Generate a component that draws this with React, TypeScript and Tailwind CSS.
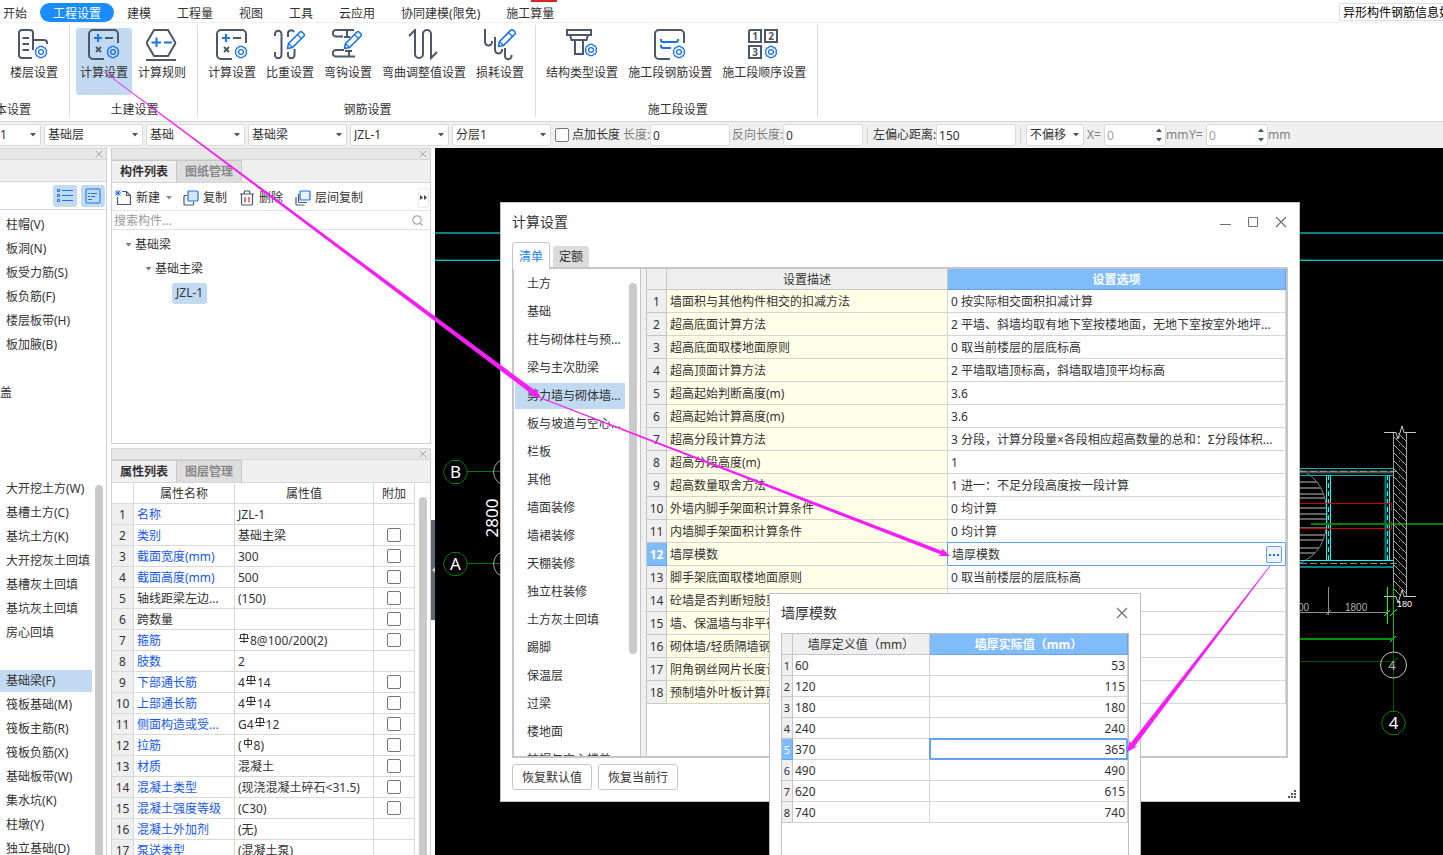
import React, { useState } from 'react';

const BLUE = '#1a73e8';
const INK = '#4d576a';

type Point = { x: number; y: number };

const gearPath = (cx: number, cy: number, r: number): string => {
  const count = 6;
  let d = '';
  for (let i = 0; i < count; i++) {
    const mid = (i / count) * Math.PI * 2 - Math.PI / 2;
    const at = (angle: number, radius: number) =>
      `${(cx + Math.cos(angle) * radius).toFixed(2)} ${(cy + Math.sin(angle) * radius).toFixed(2)}`;
    d += `${i === 0 ? 'M' : 'L'}${at(mid - 0.3, r)} L${at(mid + 0.3, r)} `;
    d += `Q${at(mid + 0.52, r * 0.72)} ${at(mid + 0.75, r)} `;
  }
  return `${d}Z`;
};

const Gear = ({ x, y }: Point): React.ReactElement => (
  <g stroke={BLUE} strokeWidth="1.3" strokeLinejoin="round">
    <path d={gearPath(x, y, 5.8)} />
    <circle cx={x} cy={y} r="2.4" />
  </g>
);

const Pencil = ({ x, y }: Point): React.ReactElement => (
  <g transform={`translate(${x} ${y})`} stroke={BLUE} strokeWidth="1.6" strokeLinejoin="round" fill="#fff">
    <path d="M0.5 17.5 L1.5 12.5 L13 1 Q14 0.2 15 1 L17 3 Q17.8 4 17 5 L5.5 16.5 Z" />
    <path d="M10.5 3.5 L14.5 7.5 M1.5 12.5 L5.5 16.5" strokeWidth="1.2" />
  </g>
);

const FRAME = 'M30 14 V5 a4 4 0 0 0 -4 -4 H5 a4 4 0 0 0 -4 4 V26 a4 4 0 0 0 4 4 H16';

const ICONS: Record<string, React.ReactElement> = {
  floor: (
    <>
      <path d="M15 21 V4 a3 3 0 0 0 -3 -3 H4 a3 3 0 0 0 -3 3 V26 a3 3 0 0 0 3 3 H14" />
      <path d="M4.5 9 H11 M4.5 15 H11 M4.5 21 H11 M15 11 H26 a3 3 0 0 1 3 3 V15" />
      <Gear x={23} y={23} />
    </>
  ),
  calc: (
    <>
      <path d={FRAME} />
      <path d="M17 9 H25 M8 18 L13 23 M13 18 L8 23" />
      <path d="M6 9 H14 M10 5 V13" stroke={BLUE} />
      <Gear x={25} y={23} />
    </>
  ),
  rule: (
    <>
      <path d="M8 1 H22 L29 13 Q29.5 14 29 15 L22 27 H8 L1 15 Q0.5 14 1 13 Z M0 31 H30" />
      <path d="M5.5 13.5 H15 M10.5 8.5 V18 M18 13.5 H26" stroke={BLUE} />
    </>
  ),
  weight: (
    <>
      <path d="M1 7 V5 a3.2 3.2 0 0 1 6.5 0 V26 a3.2 3.2 0 0 1 -6.5 0 V23" />
      <path d="M14 8 V5 a3.2 3.2 0 0 1 6 -2 M14 23 V26 a3.2 3.2 0 0 0 6.5 0 V20" />
      <Pencil x={13} y={2} />
    </>
  ),
  hook: (
    <>
      <path d="M22 1 H4 a3 3 0 0 0 0 6.5 H11 M15 1 V9 M12 8 H18" />
      <path d="M12 21 H4 a3 3 0 0 0 0 6.5 H23 M17 22 V27 M13 22 H20" />
      <Pencil x={12} y={2} />
    </>
  ),
  bend: <path d="M1 7 L7 1 V25 a4 4 0 0 0 8 0 V5 a4 4 0 0 1 8 0 V29 L29 23" />,
  loss: (
    <>
      <path d="M1 0 V13 a3.4 3.4 0 0 0 7 0 V12" />
      <path d="M11 8 V21 a3.4 3.4 0 0 0 7 0 V20 M21 19 V27 a3.2 3.2 0 0 0 6.5 0 V26" />
      <Pencil x={14} y={0} />
    </>
  ),
  structure: (
    <>
      <path d="M1 1 H25 V6 H1 Z M4 6 L5.5 11 H20.5 L22 6 M9 11 V25 H17 V11" />
      <Gear x={25} y={21} />
    </>
  ),
  rebar: (
    <>
      <path d={FRAME} />
      <path d="M7 10 V11 a2 2 0 0 0 2 2 H22 a2 2 0 0 0 2 -2 V10 M7 16 V17 a2 2 0 0 0 2 2 H17" stroke={BLUE} />
      <Gear x={25} y={23} />
    </>
  ),
  order: (
    <>
      <path d="M2 1 H13 V13 H1 V2 Z M17 1 H29 V13 H17 Z M1 17 H13 V29 H1 Z" />
      <g fill={INK} stroke="none" fontSize="10" fontWeight="700" textAnchor="middle">
        <text x="7" y="11">1</text>
        <text x="23" y="11">2</text>
        <text x="7" y="27">3</text>
      </g>
      <Gear x={23} y={23} />
    </>
  ),
};

const RibbonIcon = ({ name }: { name: string }): React.ReactElement => (
  <svg width="32" height="32" viewBox="0 0 32 32" fill="none" stroke={INK} strokeWidth="2">
    {ICONS[name]}
  </svg>
);

const MENUS = ['开始', '工程设置', '建模', '工程量', '视图', '工具', '云应用', '协同建模(限免)', '施工算量'];

const RIBBON_GROUPS = [
  {
    label: '土建设置',
    items: [
      { icon: 'calc', label: '计算设置', active: true },
      { icon: 'rule', label: '计算规则' },
    ],
  },
  {
    label: '钢筋设置',
    items: [
      { icon: 'calc', label: '计算设置' },
      { icon: 'weight', label: '比重设置' },
      { icon: 'hook', label: '弯钩设置' },
      { icon: 'bend', label: '弯曲调整值设置' },
      { icon: 'loss', label: '损耗设置' },
    ],
  },
  {
    label: '施工段设置',
    items: [
      { icon: 'structure', label: '结构类型设置' },
      { icon: 'rebar', label: '施工段钢筋设置' },
      { icon: 'order', label: '施工段顺序设置' },
    ],
  },
];

const COMPONENT_TYPES = [
  '柱帽(V)', '板洞(N)', '板受力筋(S)', '板负筋(F)', '楼层板带(H)', '板加腋(B)', '', '盖', '', '', '',
  '大开挖土方(W)', '基槽土方(C)', '基坑土方(K)', '大开挖灰土回填', '基槽灰土回填', '基坑灰土回填',
  '房心回填', '', '基础梁(F)', '筏板基础(M)', '筏板主筋(R)', '筏板负筋(X)', '基础板带(W)', '集水坑(K)',
  '柱墩(Y)', '独立基础(D)',
];

type Property = { name: string; value: string; plain?: boolean; check?: boolean };

// {3} and {1} in a value stand for the rebar grade marks
const PROPERTIES: Array<Property> = [
  { name: '名称', value: 'JZL-1' },
  { name: '类别', value: '基础主梁', check: true },
  { name: '截面宽度(mm)', value: '300', check: true },
  { name: '截面高度(mm)', value: '500', check: true },
  { name: '轴线距梁左边...', value: '(150)', plain: true, check: true },
  { name: '跨数量', value: '', plain: true, check: true },
  { name: '箍筋', value: '{3}8@100/200(2)', check: true },
  { name: '肢数', value: '2' },
  { name: '下部通长筋', value: '4{3}14', check: true },
  { name: '上部通长筋', value: '4{3}14', check: true },
  { name: '侧面构造或受...', value: 'G4{3}12', check: true },
  { name: '拉筋', value: '({1}8)', check: true },
  { name: '材质', value: '混凝土', check: true },
  { name: '混凝土类型', value: '(现浇混凝土碎石<31.5)', check: true },
  { name: '混凝土强度等级', value: '(C30)', check: true },
  { name: '混凝土外加剂', value: '(无)' },
  { name: '泵送类型', value: '(混凝土泵)' },
];

const CATEGORIES = [
  '土方', '基础', '柱与砌体柱与预...', '梁与主次肋梁', '剪力墙与砌体墙...', '板与坡道与空心...', '栏板', '其他',
  '墙面装修', '墙裙装修', '天棚装修', '独立柱装修', '土方灰土回填', '踢脚', '保温层', '过梁', '楼地面',
  '柱帽与空心楼盖...',
];

const SETTINGS = [
  ['墙面积与其他构件相交的扣减方法', '0 按实际相交面积扣减计算'],
  ['超高底面计算方法', '2 平墙、斜墙均取有地下室按楼地面，无地下室按室外地坪...'],
  ['超高底面取楼地面原则', '0 取当前楼层的层底标高'],
  ['超高顶面计算方法', '2 平墙取墙顶标高，斜墙取墙顶平均标高'],
  ['超高起始判断高度(m)', '3.6'],
  ['超高起始计算高度(m)', '3.6'],
  ['超高分段计算方法', '3 分段，计算分段量×各段相应超高数量的总和：Σ分段体积...'],
  ['超高分段高度(m)', '1'],
  ['超高数量取舍方法', '1 进一：不足分段高度按一段计算'],
  ['外墙内脚手架面积计算条件', '0 均计算'],
  ['内墙脚手架面积计算条件', '0 均计算'],
  ['墙厚模数', '墙厚模数'],
  ['脚手架底面取楼地面原则', '0 取当前楼层的层底标高'],
  ['砼墙是否判断短肢剪', ''],
  ['墙、保温墙与非平行', ''],
  ['砌体墙/轻质隔墙钢', ''],
  ['阴角钢丝网片长度计', ''],
  ['预制墙外叶板计算面', ''],
];

const WALL_MODULES = [
  [60, 53],
  [120, 115],
  [180, 180],
  [240, 240],
  [370, 365],
  [490, 490],
  [620, 615],
  [740, 740],
];

const CloseIcon = ({ size }: { size: number }): React.ReactElement => (
  <svg width={size} height={size} viewBox="0 0 12 12" fill="none" stroke="currentColor" strokeWidth="1.2">
    <path d="M1 1 L11 11 M11 1 L1 11" />
  </svg>
);

const Caret = ({ className = '' }: { className?: string }): React.ReactElement => (
  <svg width="6" height="4" viewBox="0 0 6 4" className={className} fill="currentColor">
    <path d="M0 0 H6 L3 3.6 Z" />
  </svg>
);

const SelectBox = ({ label, value, width }: { label: string; value: string; width: string }) => (
  <div className={`relative shrink-0 ${width}`}>
    <select
      aria-label={label}
      className="block h-[22px] w-full appearance-none rounded-[3px] border border-[#d9d9d9] bg-white pl-[3px]"
    >
      <option>{value}</option>
    </select>
    <Caret className="pointer-events-none absolute top-[9px] right-[5px] text-[#4d576a]" />
  </div>
);

const FIELD = 'h-[22px] rounded-[3px] border border-[#d9d9d9] bg-white px-[2px]';
const CHECKBOX = 'block appearance-none rounded-[2px] border border-[#777] bg-white';

const SpinBox = ({ id, label }: { id: string; label: string }): React.ReactElement => (
  <div className="flex items-center text-[#808080]">
    <label htmlFor={id} className="w-[17px] shrink-0">{label}</label>
    <div className="relative">
      <input id={id} type="text" defaultValue="0" className={`${FIELD} block w-[62px] text-[#a0a0a0]`} />
      <div className="pointer-events-none absolute top-[4px] right-[4px] flex h-[14px] flex-col justify-between text-[#4d576a]">
        <Caret className="rotate-180" />
        <Caret />
      </div>
    </div>
    <span className="w-[23px]">mm</span>
  </div>
);

const MenuBar = (): React.ReactElement => {
  const [current, setCurrent] = useState('工程设置');
  return (
    <nav className="relative flex h-[23px] shrink-0 items-end border-b border-[#f0f0f0]">
      {MENUS.map((menu, index) => (
        <button
          type="button"
          key={menu}
          onClick={() => setCurrent(menu)}
          className={`h-[19px] shrink-0 rounded-full pt-[2px] pr-[13px] leading-[17px] ${
            index === 0 ? 'pl-[3px]' : 'pl-[13px]'
          } ${menu === current ? 'bg-[#1a8cff] text-white' : ''}`}
        >
          {menu}
        </button>
      ))}
      <span className="absolute top-0 left-[531px] h-[2px] w-[26px] bg-[#e02020]" />
      <div className="mb-[1px] ml-auto h-[18px] w-[104px] overflow-hidden rounded-l-[2px] border border-r-0 border-[#ddd] pl-[3px] leading-[18px] whitespace-nowrap text-black">
        异形构件钢筋信息如
      </div>
    </nav>
  );
};

const RibbonButton = ({ icon, label, active }: { icon: string; label: string; active?: boolean }) => (
  <button
    type="button"
    className={`flex h-[67px] shrink-0 flex-col items-center rounded-[3px] px-1 pt-px ${active ? 'bg-[#c2d9f2]' : ''}`}
  >
    <RibbonIcon name={icon} />
    <span className="mt-[3px] leading-[18px]">{label}</span>
  </button>
);

const Ribbon = (): React.ReactElement => (
  <div className="flex h-[98px] shrink-0 overflow-hidden pt-[2px] pb-[4px]">
    <div className="flex w-[70px] shrink-0 flex-col items-start border-r border-[#dcdcdc] pt-[3px]">
      <div className="pl-[6px]">
        <RibbonButton icon="floor" label="楼层设置" />
      </div>
      <div className="-ml-[5px] pt-[6px] leading-[18px]">本设置</div>
    </div>
    {RIBBON_GROUPS.map((group) => (
      <div key={group.label} className="flex shrink-0 flex-col border-r border-[#dcdcdc] pt-[3px] pr-[7px] pl-[6px]">
        <div className="flex gap-[2px]">
          {group.items.map((item) => (
            <RibbonButton key={item.label} {...item} />
          ))}
        </div>
        <div className="pt-[6px] pl-[3px] text-center leading-[18px]">{group.label}</div>
      </div>
    ))}
  </div>
);

const OptionBar = (): React.ReactElement => (
  <div className="flex h-[27px] shrink-0 items-center overflow-hidden border-t border-[#d4d4d4] bg-[#f0f0f0] whitespace-nowrap">
    <div className="flex shrink-0 gap-[3px]">
      <div className="relative w-[41px]">
        <select
          aria-label="分区"
          className="block h-[22px] w-full appearance-none rounded-r-[3px] border border-l-0 border-[#d9d9d9] bg-white"
        >
          <option>1</option>
        </select>
        <Caret className="pointer-events-none absolute top-[9px] right-[5px] text-[#4d576a]" />
      </div>
      <SelectBox label="楼层" value="基础层" width="w-[99px]" />
      <SelectBox label="构件类别" value="基础" width="w-[99px]" />
      <SelectBox label="构件类型" value="基础梁" width="w-[99px]" />
      <SelectBox label="构件" value="JZL-1" width="w-[99px]" />
      <SelectBox label="分层" value="分层1" width="w-[99px]" />
    </div>
    <label className="ml-[4px] flex items-center gap-[3px]">
      <input type="checkbox" className={`${CHECKBOX} size-[14px]`} />
      点加长度
    </label>
    <label htmlFor="length" className="ml-[3px] w-[27px] text-[#808080]">长度:</label>
    <input id="length" type="text" defaultValue="0" className={`${FIELD} w-[80px]`} />
    <label htmlFor="reverse" className="ml-[2px] w-[51px] text-[#808080]">反向长度:</label>
    <input id="reverse" type="text" defaultValue="0" className={`${FIELD} w-[80px]`} />
    <span className="mx-[4px] h-[17px] w-px bg-[#d0d0d0]" />
    <label htmlFor="offset" className="w-[64px] pl-px">左偏心距离:</label>
    <input id="offset" type="text" defaultValue="150" className={`${FIELD} w-[80px]`} />
    <span className="mx-[4px] h-[17px] w-px bg-[#d0d0d0]" />
    <SelectBox label="偏移" value="不偏移" width="w-[58px] ml-px mr-[3px]" />
    <SpinBox id="offset-x" label="X=" />
    <SpinBox id="offset-y" label="Y=" />
  </div>
);

const PanelTitle = (): React.ReactElement => (
  <div className="flex h-[12px] shrink-0 items-center justify-end border-y border-[#d6d6d6] bg-[#e8e8e8] pr-[3px]">
    <button type="button" aria-label="关闭" className="text-[#999]">
      <CloseIcon size={8} />
    </button>
  </div>
);

const PanelTabs = ({ tabs }: { tabs: Array<string> }): React.ReactElement => (
  <div className="flex h-[23px] shrink-0 border-b border-[#d6d6d6] bg-[#f0f0f0] font-bold">
    {tabs.map((tab, index) => (
      <button
        type="button"
        key={tab}
        className={`h-[22px] w-[65px] border-t border-r border-[#c8c8cc] pt-px ${
          index === 0 ? 'bg-[#f0f0f0]' : 'bg-[#dedede] text-[#888]'
        }`}
      >
        {tab}
      </button>
    ))}
  </div>
);

const TypePanel = (): React.ReactElement => (
  <aside className="flex w-[107px] shrink-0 flex-col border-r border-[#d0d0d0]">
    <PanelTitle />
    <div className="h-[22px] shrink-0 border-b border-[#d6d6d6] bg-[#f0f0f0]" />
    <div className="flex h-[28px] shrink-0 items-center justify-end gap-[4px] border-b border-[#d6d6d6] pr-[1px]">
      <button type="button" aria-label="列表" className="flex h-[22px] w-[24px] items-center justify-center rounded-[3px] bg-[#c2d9f2]">
        <svg width="16" height="14" viewBox="0 0 16 14" fill="none" stroke={BLUE}>
          <path d="M0.5 0.5 H2.5 V2.5 H0.5 Z M0.5 5.5 H2.5 V7.5 H0.5 Z M0.5 10.5 H2.5 V12.5 H0.5 Z M5 1.5 H16 M5 6.5 H16 M5 11.5 H16" />
        </svg>
      </button>
      <button type="button" aria-label="详细" className="flex h-[22px] w-[24px] items-center justify-center rounded-[3px] bg-[#c2d9f2]">
        <svg width="16" height="16" viewBox="0 0 16 16" fill="none" stroke={BLUE}>
          <rect x="1" y="1" width="14" height="14" rx="1" />
          <path d="M3 5.5 H5 M6 5.5 H12 M3 8.5 H5 M6 8.5 H10 M3 11.5 H7" />
        </svg>
      </button>
    </div>
    <div className="flex min-h-0 flex-1">
      <ul className="w-[92px] shrink-0 overflow-hidden pt-[3px] whitespace-nowrap">
        {COMPONENT_TYPES.map((type, index) => (
          <li key={index} className="py-px">
            <div
              className={`flex h-[22px] items-center ${type === '盖' ? '' : 'pl-[6px]'} ${
                type === '基础梁(F)' ? 'bg-[#c2d9f2]' : ''
              }`}
            >
              {type}
            </div>
          </li>
        ))}
      </ul>
      <div className="mt-[275px] ml-[3px] w-[8px] rounded-t-full bg-[#cacaca]" />
    </div>
  </aside>
);

const ListPanel = (): React.ReactElement => (
  <section className="flex h-[296px] shrink-0 flex-col border-x border-b border-[#d0d0d0]">
    <PanelTitle />
    <PanelTabs tabs={['构件列表', '图纸管理']} />
    <div className="flex h-[28px] shrink-0 items-center border-b border-[#e4e4e4] pt-[2px] pl-[3px]">
      <button type="button" className="flex items-center gap-[4px]">
        <svg width="17" height="16" viewBox="0 0 17 16" fill="none" stroke={INK} strokeWidth="1.2">
          <path d="M7 1.5 H11.5 L15.5 5.5 V14.5 H2.5 V7 M11.5 1.5 V5.5 H15.5" />
          <path d="M0.5 0.5 L5.5 5.5 M5.5 0.5 L0.5 5.5 M3 0 V6 M0 3 H6" stroke={BLUE} strokeWidth="1" />
        </svg>
        新建
      </button>
      <Caret className="ml-[6px] text-[#888]" />
      <button type="button" className="ml-[11px] flex items-center gap-[4px]">
        <svg width="16" height="16" viewBox="0 0 16 16" fill="none" strokeWidth="1.2">
          <path d="M4 5.5 H2 Q1 5.5 1 6.5 V14 Q1 15 2 15 H9.5 Q10.5 15 10.5 14 V12" stroke={INK} />
          <rect x="5" y="1" width="10" height="10" rx="1" fill="#d5e6fd" stroke={BLUE} />
        </svg>
        复制
      </button>
      <button type="button" className="ml-[13px] flex items-center gap-[5px]">
        <svg width="14" height="16" viewBox="0 0 14 16" fill="none" stroke={INK} strokeWidth="1.2">
          <path d="M0 4 H14 M4 4 L4.5 1 H9.5 L10 4 M1.5 4 V14 Q1.5 15 2.5 15 H11.5 Q12.5 15 12.5 14 V4" />
          <path d="M5 7 V12.5 M9 7 V12.5" stroke="#e02020" />
        </svg>
        删除
      </button>
      <button type="button" className="ml-[12px] flex items-center gap-[4px]">
        <svg width="16" height="16" viewBox="0 0 16 16" fill="none" strokeWidth="1.2">
          <path d="M3.5 4 V11.5 Q3.5 12.5 4.5 12.5 H12 M1 7 V14 Q1 15 2 15 H9.5" stroke={INK} />
          <rect x="5" y="1" width="10" height="9" rx="1" fill="#e8f1fe" stroke={BLUE} />
        </svg>
        层间复制
      </button>
      <button type="button" aria-label="更多" className="mr-[1px] ml-auto flex h-[20px] w-[11px] items-center justify-center rounded-[3px] border border-[#e8e8e8]">
        <svg width="7" height="5" viewBox="0 0 7 5" fill="#3d4657">
          <path d="M0 0 L3 2.5 L0 5 Z M4 0 L7 2.5 L4 5 Z" />
        </svg>
      </button>
    </div>
    <div className="flex h-[19px] shrink-0 items-center border-b border-[#e0e0e0] pt-px pr-[7px] pl-[2px]">
      <input
        type="text"
        aria-label="搜索构件"
        placeholder="搜索构件..."
        className="w-full min-w-0 flex-1 leading-[18px] placeholder:text-[#999]"
      />
      <svg width="11" height="11" viewBox="0 0 11 11" fill="none" stroke="#aaa" strokeWidth="1.2">
        <circle cx="5" cy="5" r="4.2" />
        <path d="M8 8 L10.5 10.5" />
      </svg>
    </div>
    <ul className="pt-[3px]">
      <li className="flex h-[24px] items-center gap-[3px] pl-[13px]">
        <Caret className="w-[7px] text-[#777]" />
        基础梁
      </li>
      <li className="flex h-[24px] items-center gap-[3px] pl-[33px]">
        <Caret className="w-[7px] text-[#777]" />
        基础主梁
      </li>
      <li className="flex h-[24px] items-center pl-[60px]">
        <span className="h-[21px] rounded-[3px] bg-[#c2d9f2] px-[4px] leading-[20px]">JZL-1</span>
      </li>
    </ul>
  </section>
);

const RebarMark = ({ grade }: { grade: number }): React.ReactElement => (
  <svg
    width="12"
    height="10"
    viewBox="0 0 12 10"
    className="mb-[2px] inline-block align-baseline"
    fill="none"
    stroke="#333"
  >
    {grade === 3 ? (
      <path d="M2.5 1.5 H9.5 V5.5 H2.5 Z M6 0 V10 M1 5.5 H11 M2 8.5 H10" />
    ) : (
      <path d="M2.5 2.5 H9.5 V6.5 H2.5 Z M6 0 V10" />
    )}
  </svg>
);

const PropertyValue = ({ value }: { value: string }): React.ReactElement => (
  <div className="h-[18px] overflow-hidden pl-[3px]">
    {value.split(/(\{\d\})/).map((part, index) => {
      if (part === '{3}') return <RebarMark grade={3} key={index} />;
      if (part === '{1}') return <RebarMark grade={1} key={index} />;
      return part;
    })}
  </div>
);

const PropertyPanel = (): React.ReactElement => (
  <section className="mt-[4px] flex min-h-0 flex-1 flex-col overflow-hidden border-x border-[#d0d0d0]">
    <PanelTitle />
    <PanelTabs tabs={['属性列表', '图层管理']} />
    <div className="flex min-h-0 flex-1">
      <div className="w-[303px] shrink-0 overflow-hidden">
        <table className="w-full table-fixed border-separate border-spacing-0 leading-[18px]">
          <thead>
            <tr className="h-[21px] [&>th]:border-r [&>th]:border-b [&>th]:border-[#d9d9d9] [&>th]:p-0 [&>th]:pt-px [&>th]:font-normal">
              <th className="w-[22px]"></th>
              <th className="w-[101px]">属性名称</th>
              <th className="w-[139px]">属性值</th>
              <th>附加</th>
            </tr>
          </thead>
          <tbody>
            {PROPERTIES.map((property, index) => (
              <tr
                key={property.name}
                className="h-[21px] [&>*]:border-r [&>*]:border-b [&>*]:border-[#d9d9d9] [&>*]:p-0 [&>*:not(:last-child)]:pt-px"
              >
                <th className="bg-[#efefef] font-normal">{index + 1}</th>
                <td className={`truncate ${property.plain ? '' : 'text-[#1557f0]'}`}>
                  <span className="pl-[3px]">{property.name}</span>
                </td>
                <td className="whitespace-nowrap">
                  <PropertyValue value={property.value} />
                </td>
                <td>
                  {property.check && (
                    <input type="checkbox" aria-label={property.name} className={`${CHECKBOX} mx-auto size-[14px]`} />
                  )}
                </td>
              </tr>
            ))}
          </tbody>
        </table>
      </div>
      <div className="mt-[14px] ml-[4px] w-[8px] rounded-t-full bg-[#cacaca]" />
    </div>
  </section>
);

const HATCH = Array.from({ length: 22 }, (_, i) => 428 + i * 8);
const SLAB_LINES = [482, 488, 494, 498, 508, 514, 519, 528, 535, 540, 548, 553];

const Drawing = (): React.ReactElement => (
  <svg width="1008" height="707" viewBox="435 148 1008 707" fill="none" className="absolute top-0 left-0">
    <defs>
      <clipPath id="wall">
        <rect x="1394" y="433" width="13" height="163" />
      </clipPath>
      <clipPath id="slab">
        <path d="M1290 470 H1300 Q1327 480 1327 517 Q1327 552 1300 563 H1290 Z" />
      </clipPath>
    </defs>
    <path d="M435 233 H1443" stroke="#008080" strokeWidth="2" />
    <path d="M435 259.5 H1443" stroke="#004b4b" />
    <path d="M435 260.5 H1443" stroke="#00c0c0" />

    {[
      { y: 472, name: 'B' },
      { y: 564, name: 'A' },
    ].map(({ y, name }) => (
      <g key={name}>
        <path
          d={`M443.5 ${y} l2.3 -7 l6 -4.5 h7.4 l6 4.5 l2.3 7 l-2.3 7 l-6 4.5 h-7.4 l-6 -4.5 Z M467.5 ${y - 0.5} H500`}
          stroke="#007a00"
        />
        <circle cx="507" cy={y} r="13.5" stroke="#aaa" />
        <text x="455.5" y={y + 6} fill="#fff" fontSize="17" textAnchor="middle">{name}</text>
      </g>
    ))}
    <text transform="translate(498 518) rotate(-90)" fill="#fff" fontSize="17" textAnchor="middle">2800</text>

    <g clipPath="url(#slab)" stroke="#606060" strokeWidth="2">
      {SLAB_LINES.map((y) => (
        <path key={y} d={`M1300 ${y} H1328`} />
      ))}
    </g>
    <path d="M1300 470 Q1327 480 1327 517 Q1327 552 1300 563" stroke="#808080" />
    <path d="M1300 468.5 H1393 M1300 475.5 H1393" stroke="#00b4b4" />
    <path d="M1300 472 H1393" stroke="#505050" strokeWidth="3" />
    <path d="M1300 471.5 H1400 M1300 563.5 H1400" stroke="#909090" strokeDasharray="7 3" />
    <path d="M1300 560.5 H1393" stroke="#00ffff" />
    <path d="M1300 567 H1393" stroke="#008080" strokeWidth="2" />
    <path d="M1326.5 475 V560 M1330.5 475 V560 M1389.5 475 V560" stroke="#00ffff" />
    <path d="M1328.5 475 V560 M1387.5 475 V560" stroke="#00ffff" strokeDasharray="5 3" />
    <path d="M1385.5 475 V560" stroke="#008080" strokeWidth="2" />
    <path d="M1300 503.5 H1391.5 V511 M1300 528.5 H1391.5 V521" stroke="#c80000" />
    <path d="M1311 524 H1443" stroke="#008000" strokeWidth="2" />

    <g clipPath="url(#wall)" stroke="#a0a0a0">
      {HATCH.map((y) => (
        <path key={y} d={`M1393 ${y} l14 14 M1396 ${y + 3} h1 M1402 ${y + 2} h1 M1399 ${y + 9} h1`} />
      ))}
    </g>
    <path d="M1393.5 433 V596 M1406.5 433 V596" stroke="#a0a0a0" />
    <path d="M1384 432.5 H1396 L1398 439 L1402 426 L1404 432.5 H1416" stroke="#c8c8c8" />
    <path d="M1384 596.5 H1396 L1398 603 L1402 590 L1404 596.5 H1416" stroke="#c8c8c8" />

    <path d="M1300 612.5 H1388 M1328.5 587 V615 M1326 615 l5 -5" stroke="#909090" />
    <path d="M1387.5 587 V624 M1384 616 l6 -6 M1390 616 l7 -7 M1390 642 l6 -6" stroke="#00ff00" />
    <path d="M1393.5 586 V652" stroke="#00c000" />
    <path d="M1393.5 652 V712" stroke="#005a00" />
    <path d="M1300 639 H1393" stroke="#009000" strokeWidth="2" />
    <path d="M1300 661.5 H1393" stroke="#005000" />
    <g fill="#b0b0b0" fontSize="10" fontFamily="Liberation Sans">
      <text x="1298" y="611">00</text>
      <text x="1345" y="611">1800</text>
      <text x="1397" y="607" fontSize="9" fill="#fff">180</text>
    </g>
    <circle cx="1393.5" cy="665" r="13" stroke="#c0c0c0" />
    <text x="1392" y="670" fill="#c0c0c0" fontSize="13" textAnchor="middle">4</text>
    <path d="M1390 668 L1398 657" stroke="#008000" />
    <path d="M1381.5 723 l2.3 -7 l6 -4.5 h7.4 l6 4.5 l2.3 7 l-2.3 7 l-6 4.5 h-7.4 l-6 -4.5 Z" stroke="#007a00" />
    <text x="1393.5" y="729" fill="#fff" fontSize="17" textAnchor="middle">4</text>
  </svg>
);

const SettingsDialog = (): React.ReactElement => {
  const [category, setCategory] = useState(4);
  return (
    <section
      role="dialog"
      aria-label="计算设置"
      className="absolute top-[54px] left-[65px] flex h-[600px] w-[800px] flex-col border border-[#c0c0c0] bg-white"
    >
      <header className="flex h-[38px] shrink-0 items-center pr-[12px] pl-[11px] text-[#707070]">
        <h2 className="mr-auto text-[14px] text-[#333]">计算设置</h2>
        <button type="button" aria-label="最小化" className="flex size-[12px] items-center justify-center">
          <svg width="11" height="11" viewBox="0 0 11 11" stroke="currentColor">
            <path d="M0 7.5 H11" />
          </svg>
        </button>
        <button type="button" aria-label="最大化" className="ml-[16px] flex size-[12px] items-center justify-center">
          <svg width="11" height="11" viewBox="0 0 11 11" fill="none" stroke="currentColor">
            <path d="M0.5 0.5 H9.5 V9.5 H0.5 Z" />
          </svg>
        </button>
        <button type="button" aria-label="关闭" className="ml-[16px]">
          <CloseIcon size={12} />
        </button>
      </header>
      <div className="flex h-[26px] shrink-0 items-end gap-[3px] pl-[11px]">
        <button type="button" className="relative z-10 -mb-[2px] h-[27px] w-[38px] rounded-t-[4px] border border-b-0 border-[#c6c6ca] bg-white pt-px text-[#1a7fe8]">
          清单
        </button>
        <button type="button" className="h-[21px] w-[36px] rounded-t-[3px] bg-[#dcdcdc]">
          定额
        </button>
      </div>
      <div className="mx-[11px] flex min-h-0 flex-1 overflow-hidden border-2 border-[#c6c6ca]">
        <div className="flex w-[127px] shrink-0 border-r border-[#c6c6ca]">
          <ul className="w-[112px] p-px whitespace-nowrap">
            {CATEGORIES.map((name, index) => (
              <li key={name} className="py-px">
                <button
                  type="button"
                  onClick={() => setCategory(index)}
                  className={`block h-[26px] w-full pl-[12px] text-left ${index === category ? 'bg-[#c2d9f2]' : ''}`}
                >
                  {name}
                </button>
              </li>
            ))}
          </ul>
          <div className="mt-[14px] ml-[3px] h-[371px] w-[8px] rounded-full bg-[#cacaca]" />
        </div>
        <div className="w-[5px] shrink-0 bg-[#f0f0f0]" />
        <div className="min-w-0 flex-1 border-l border-[#c6c6ca]">
          <table className="w-full table-fixed border-separate border-spacing-0 leading-[18px]">
            <thead>
              <tr className="h-[21px] [&>th]:border-r [&>th]:border-b [&>th]:p-0 [&>th]:pt-px">
                <th className="w-[20px] border-[#c6c6ca] bg-[#efefef]"></th>
                <th className="w-[281px] border-[#c6c6ca] bg-[#efefef] font-normal">设置描述</th>
                <th className="border-[#62a5ee] bg-[#80bbfb] text-white">设置选项</th>
              </tr>
            </thead>
            <tbody>
              {SETTINGS.map(([description, option], index) => {
                const current = index === 11;
                return (
                  <tr key={description} className="h-[23px] [&>*]:border-r [&>*]:border-b [&>*]:p-0 [&>*]:pt-[2px]">
                    <th
                      className={
                        current
                          ? 'border-[#62a5ee] bg-[#80bbfb] text-white'
                          : 'border-[#c6c6ca] bg-[#efefef] font-normal'
                      }
                    >
                      {index + 1}
                    </th>
                    <td className="overflow-hidden border-[#d4d4d4] bg-[#fffee6] whitespace-nowrap">
                      <span className="pl-[3px]">{description}</span>
                    </td>
                    {current ? (
                      <td className="border-[#62a5ee] shadow-[-1px_-1px_0_#62a5ee]">
                        <div className="flex items-start justify-between pr-[3px] pl-[4px]">
                          {option}
                          <button
                            type="button"
                            aria-label="编辑"
                            className="flex h-[17px] w-[16px] items-center justify-center rounded-[2px] border border-[#62a5ee] bg-[#eef4fc]"
                          >
                            <svg width="10" height="2" viewBox="0 0 10 2" fill={BLUE}>
                              <path d="M0 0 H2 V2 H0 Z M4 0 H6 V2 H4 Z M8 0 H10 V2 H8 Z" />
                            </svg>
                          </button>
                        </div>
                      </td>
                    ) : (
                      <td className="overflow-hidden border-[#d4d4d4] whitespace-nowrap">
                        <span className="pl-[3px]">{option}</span>
                      </td>
                    )}
                  </tr>
                );
              })}
            </tbody>
          </table>
        </div>
      </div>
      <footer className="flex h-[43px] shrink-0 gap-[6px] px-[11px] pt-[6px]">
        {['恢复默认值', '恢复当前行'].map((label) => (
          <button type="button" key={label} className="h-[26px] w-[80px] rounded-[3px] border border-[#c8c8c8] pt-px">
            {label}
          </button>
        ))}
      </footer>
      <svg width="8" height="8" viewBox="0 0 8 8" fill="#555" className="absolute right-[3px] bottom-[3px]">
        <path d="M6 0 h2 v2 h-2 Z M6 3 h2 v2 h-2 Z M3 3 h2 v2 h-2 Z M6 6 h2 v2 h-2 Z M3 6 h2 v2 h-2 Z M0 6 h2 v2 h-2 Z" />
      </svg>
    </section>
  );
};

const ModuleDialog = (): React.ReactElement => (
  <section
    role="dialog"
    aria-label="墙厚模数"
    className="absolute top-[445px] bottom-0 left-[334px] flex w-[372px] flex-col border border-b-0 border-[#c0c0c0] bg-white"
  >
    <header className="flex h-[39px] shrink-0 items-center justify-between pr-[12px] pb-[2px] pl-[11px]">
      <h2 className="text-[14px]">墙厚模数</h2>
      <button type="button" aria-label="关闭" className="text-[#707070]">
        <CloseIcon size={12} />
      </button>
    </header>
    <div className="mx-[11px] min-h-0 flex-1 overflow-hidden border border-b-0 border-[#c0c0c0]">
      <table className="w-full table-fixed border-separate border-spacing-0 leading-[18px]">
        <thead>
          <tr className="h-[21px] [&>th]:border-r [&>th]:border-b [&>th]:p-0 [&>th]:pt-px">
            <th className="w-[11px] border-[#c6c6ca] bg-[#efefef]"></th>
            <th className="w-[137px] border-[#c6c6ca] bg-[#efefef] font-normal">墙厚定义值（mm）</th>
            <th className="border-[#62a5ee] bg-[#80bbfb] text-white">墙厚实际值（mm）</th>
          </tr>
        </thead>
        <tbody>
          {WALL_MODULES.map(([defined, actual], index) => {
            const current = index === 4;
            return (
              <tr key={defined} className="h-[21px] [&>*]:border-r [&>*]:border-b [&>*]:p-0 [&>*]:pt-px">
                <th
                  className={`text-[11px] font-normal ${
                    current ? 'border-[#62a5ee] bg-[#80bbfb] text-white' : 'border-[#c6c6ca] bg-[#efefef]'
                  }`}
                >
                  {index + 1}
                </th>
                <td className="border-[#d4d4d4]">
                  <span className="pl-[2px]">{defined}</span>
                </td>
                <td
                  className={`text-right ${
                    current ? 'border-[#62a5ee] shadow-[inset_1px_1px_0_#62a5ee,-1px_-1px_0_#62a5ee,inset_-1px_-1px_0_#62a5ee]' : 'border-[#d4d4d4]'
                  }`}
                >
                  <span className="pr-[2px]">{actual}</span>
                </td>
              </tr>
            );
          })}
        </tbody>
      </table>
    </div>
  </section>
);

const Arrow = ({ from, to, width }: { from: Point; to: Point; width: number }): React.ReactElement => {
  const length = Math.hypot(to.x - from.x, to.y - from.y);
  const ux = (to.x - from.x) / length;
  const uy = (to.y - from.y) / length;
  const at = (along: number, side: number) =>
    `${(from.x + ux * along - uy * side).toFixed(1)},${(from.y + uy * along + ux * side).toFixed(1)}`;
  const neck = length - 9;
  const half = width / 2;
  return (
    <polygon
      points={[
        at(0, -0.4),
        at(neck, -half),
        at(neck - 2, -half - 2.5),
        at(length, 0),
        at(neck - 2, half + 2.5),
        at(neck, half),
        at(0, 0.4),
      ].join(' ')}
    />
  );
};

const App = (): React.ReactElement => (
  <div className="relative flex h-screen flex-col overflow-hidden bg-white font-['Noto_Sans','Noto_Sans_CJK_SC',sans-serif] text-[12px] leading-[18px] text-[#333]">
    <MenuBar />
    <Ribbon />
    <OptionBar />
    <main className="flex min-h-0 flex-1">
      <TypePanel />
      <div className="ml-[4px] flex w-[320px] shrink-0 flex-col">
        <ListPanel />
        <PropertyPanel />
      </div>
      <button type="button" aria-label="收起" className="mt-[372px] flex h-[100px] w-[4px] shrink-0 items-center bg-[#5c6875]">
        <svg width="4" height="6" viewBox="0 0 4 6" fill="#c8ccd0">
          <path d="M4 0 V6 L1 3 Z" />
        </svg>
      </button>
      <div className="relative min-w-0 flex-1 overflow-hidden bg-black">
        <Drawing />
        <SettingsDialog />
        <ModuleDialog />
      </div>
    </main>
    <svg className="pointer-events-none absolute inset-0 h-full w-full" fill="#f41ff4">
      <Arrow from={{ x: 103, y: 71 }} to={{ x: 541, y: 398 }} width={5} />
      <Arrow from={{ x: 541, y: 398 }} to={{ x: 950, y: 556 }} width={4} />
      <Arrow from={{ x: 1270, y: 566 }} to={{ x: 1127, y: 752 }} width={5} />
    </svg>
  </div>
);

export default App;
